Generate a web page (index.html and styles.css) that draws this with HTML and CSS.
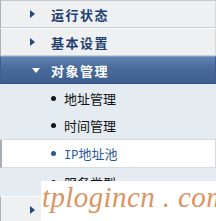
FILE: index.html
```html
<!DOCTYPE html>
<html>
<head>
<meta charset="utf-8">
<link rel="stylesheet" href="styles.css">
</head>
<body>
<div class="menu">
  <div class="item"><span class="arrow"></span><span class="label">运行状态</span></div>
  <div class="item"><span class="arrow"></span><span class="label">基本设置</span></div>
  <div class="item active"><span class="arrow down"></span><span class="label">对象管理</span></div>
  <div class="sub">
    <div class="subitem"><span class="dot"></span><span>地址管理</span></div>
    <div class="subitem sep"><span class="dot"></span><span>时间管理</span></div>
    <div class="subitem current"><span class="dot"></span><span><span class="latin">IP</span>地址池</span></div>
    <div class="subitem"><span class="dot"></span><span>服务类型</span></div>
  </div>
  <div class="item"><span class="arrow"></span><span class="label">行为管控</span></div>
</div>
<div class="watermark">tplogincn . com</div>
</body>
</html>
```

FILE: styles.css
```css
html, body {
  margin: 0;
  padding: 0;
  background: #ffffff;
  overflow: hidden;
}
body {
  width: 216px;
  height: 221px;
  position: relative;
  font-family: "Noto Sans CJK SC", "Noto Sans", sans-serif;
}
.menu {
  width: 216px;
  display: flex;
  flex-direction: column;
}
.item {
  height: 26px;
  display: flex;
  align-items: center;
  background: #eef0f2;
  border-top: 1px solid #fafbfc;
  border-bottom: 1px solid #c9ced5;
  border-left: 1px solid #a9b0b8;
  border-right: 1px solid #d6dbe0;
  box-sizing: content-box;
}
.item:first-child {
  border-top: 1px solid #c4c9cf;
}
.arrow {
  width: 0;
  height: 0;
  margin-left: 29px;
  margin-right: 16px;
  border-top: 4px solid transparent;
  border-bottom: 4px solid transparent;
  border-left: 5px solid #1d4b7d;
}
.label {
  font-size: 13px;
  font-weight: bold;
  letter-spacing: 1.5px;
  color: #1f3f6f;
}
.item.active {
  background: linear-gradient(#6384b3, #4a6c9c 40%, #3d5e8e);
  border-top: 1px solid #7d9cc6;
  border-bottom: 1px solid #34547f;
  border-left: 1px solid #3d5e8e;
  border-right: 1px solid #3d5e8e;
}
.item.active .label {
  color: #ffffff;
}
.arrow.down {
  margin-left: 31px;
  margin-right: 11px;
  border-left: 4px solid transparent;
  border-right: 4px solid transparent;
  border-top: 5px solid #ffffff;
  border-bottom: 0;
}
.sub {
  display: flex;
  flex-direction: column;
  background: #e4ebf1;
}
.subitem {
  height: 28px;
  display: flex;
  align-items: center;
  font-size: 13px;
  color: #111111;
  box-sizing: border-box;
}
.subitem.sep {
  border-bottom: 1px solid #d3dbe3;
}
.dot {
  width: 5px;
  height: 5px;
  border-radius: 50%;
  background: #111111;
  margin-left: 51px;
  margin-right: 8px;
}
.subitem.current {
  background: #ffffff;
  color: #2b5a96;
  border-left: 2px solid #a8aeb5;
  border-right: 1px solid #d6dbe0;
  border-bottom: 1px solid #d3dbe3;
}
.subitem.current .dot {
  background: #2a5c94;
  margin-left: 49px;
}
.latin {
  font-family: "Liberation Mono", monospace;
  font-size: 12px;
}
.watermark {
  position: absolute;
  left: 41px;
  top: 181px;
  right: 0;
  bottom: 0;
  background: #ffffff;
  font-family: "Liberation Serif", serif;
  font-style: italic;
  font-size: 29px;
  letter-spacing: 0.4px;
  color: #dc9462;
  line-height: 32px;
  padding-left: 1px;
  white-space: nowrap;
  overflow: hidden;
}
```
